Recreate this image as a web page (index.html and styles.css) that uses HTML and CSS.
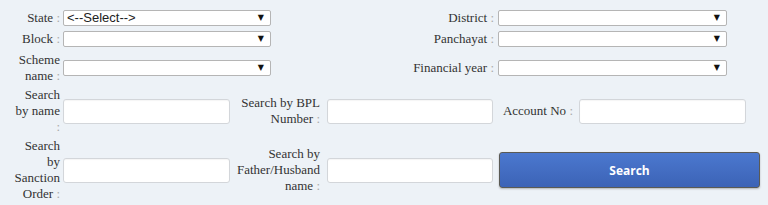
FILE: index.html
```html
<!DOCTYPE html>
<html lang="en">
<head>
    <meta charset="UTF-8">
    <title>Scheme Search</title>
    <link rel="stylesheet" href="styles.css">
</head>
<body>
    <form class="search-form">
        <div class="top-grid">
            <label class="lbl">State <span class="colon">:</span></label>
            <div class="select-wrap">
                <select class="sel">
                    <option>&lt;--Select--&gt;</option>
                </select>
            </div>
            <label class="lbl lbl-wide">District <span class="colon">:</span></label>
            <div class="select-wrap"><select class="sel"><option></option></select></div>

            <label class="lbl">Block <span class="colon">:</span></label>
            <div class="select-wrap"><select class="sel"><option></option></select></div>
            <label class="lbl lbl-wide">Panchayat <span class="colon">:</span></label>
            <div class="select-wrap"><select class="sel"><option></option></select></div>

            <label class="lbl">Scheme name <span class="colon">:</span></label>
            <div class="select-wrap"><select class="sel"><option></option></select></div>
            <label class="lbl lbl-wide">Financial year <span class="colon">:</span></label>
            <div class="select-wrap"><select class="sel"><option></option></select></div>
        </div>

        <div class="bottom-grid">
            <label class="lbl">Search by name <span class="colon">:</span></label>
            <input type="text" class="txt">
            <label class="lbl lbl-mid">Search by BPL Number <span class="colon">:</span></label>
            <input type="text" class="txt">
            <label class="lbl lbl-acc">Account No <span class="colon">:</span></label>
            <input type="text" class="txt">

            <label class="lbl">Search by Sanction Order <span class="colon">:</span></label>
            <input type="text" class="txt">
            <label class="lbl lbl-mid">Search by Father/Husband name <span class="colon">:</span></label>
            <input type="text" class="txt">
            <button type="button" class="search-btn">Search</button>
        </div>
    </form>
</body>
</html>
```

FILE: styles.css
```css
body {
    margin: 0;
    padding: 10px 0 0 8px;
    background-color: #edf2f7;
    font-family: "Liberation Serif", "Times New Roman", serif;
    font-size: 13px;
    color: #333333;
}

.lbl {
    text-align: right;
    line-height: 16px;
    padding: 0 3px 0 4px;
}

.colon {
    color: #a9a9a9;
}

/* top selects */
.top-grid {
    display: grid;
    grid-template-columns: 55px 208px 227px 229px;
    row-gap: 5px;
    align-items: center;
}

.lbl-wide {
    padding-right: 4px;
}

.select-wrap {
    position: relative;
    height: 16px;
}

.select-wrap::after {
    content: "\25BC";
    position: absolute;
    right: 7px;
    top: 3px;
    font-size: 8px;
    font-family: "DejaVu Sans", sans-serif;
    color: #111111;
    pointer-events: none;
}

.sel {
    appearance: none;
    -webkit-appearance: none;
    width: 100%;
    height: 16px;
    margin: 0;
    padding: 0 3px;
    border: 1px solid #b5b5b5;
    border-radius: 2px;
    background-color: #ffffff;
    font-family: "Liberation Sans", Arial, sans-serif;
    font-size: 13px;
    line-height: 14px;
    color: #222222;
}

/* bottom inputs */
.bottom-grid {
    display: grid;
    grid-template-columns: 55px 167px 97px 166px 86px 167px;
    row-gap: 3px;
    margin-top: 3px;
    align-items: center;
}

.lbl-mid {
    padding-right: 7px;
}

.lbl-acc {
    padding-right: 6px;
    padding-left: 2px;
}

.txt {
    box-sizing: border-box;
    height: 25px;
    width: 100%;
    margin: 0;
    border: 1px solid #d3d6da;
    border-radius: 3px;
    background-color: #ffffff;
    box-shadow: inset 0 1px 1px rgba(0,0,0,0.04);
}

.search-btn {
    grid-column: 5 / span 2;
    justify-self: start;
    width: 261px;
    height: 36px;
    margin-left: 6px;
    border: 1px solid #5a5a55;
    border-radius: 3px;
    background: linear-gradient(to bottom, #4b78cf, #3c63b6);
    box-shadow: 0 1px 2px rgba(0,0,0,0.25);
    color: #ffffff;
    font-family: "Open Sans", Arial, sans-serif;
    font-weight: bold;
    font-size: 12px;
    cursor: pointer;
}
```
